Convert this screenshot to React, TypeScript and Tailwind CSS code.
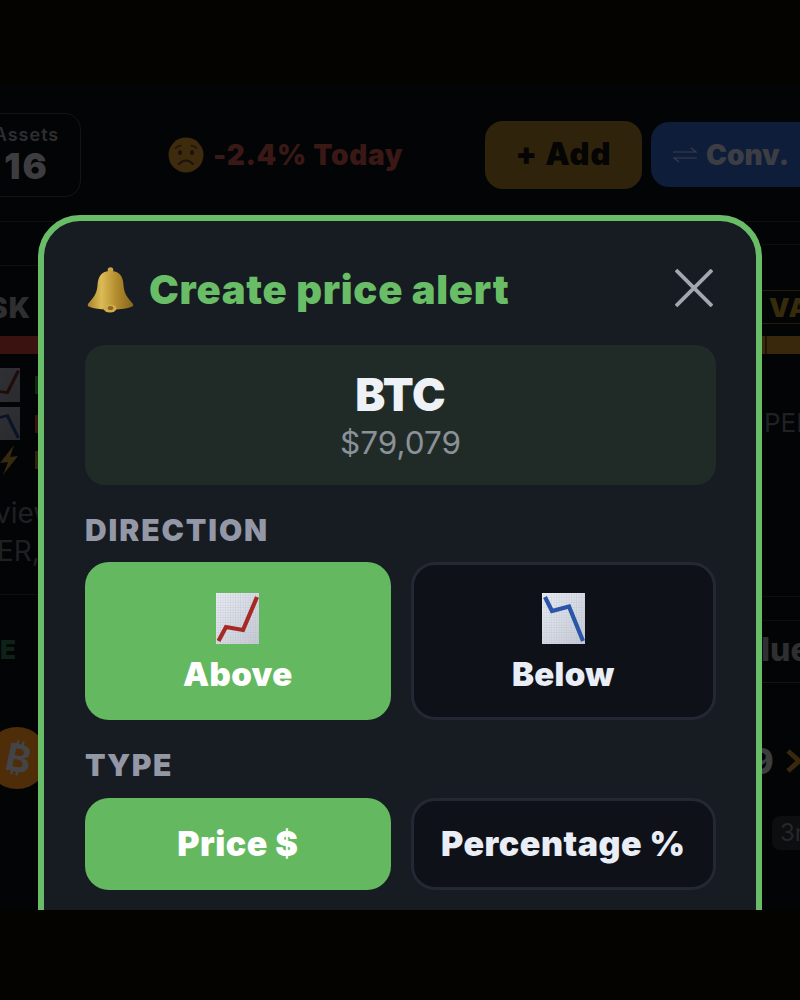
import React from 'react';

function Chart({ up, className }: { up: boolean; className: string }) {
  const id = up ? 'grid-up' : 'grid-down';
  return (
    <svg viewBox="0 0 43 51" preserveAspectRatio="none" className={className}>
      <defs>
        <linearGradient id={`${id}-bg`} x1="0" y1="0" x2="1" y2="1">
          <stop offset="0" stopColor="#eceff5" />
          <stop offset="1" stopColor="#c6cad4" />
        </linearGradient>
        <pattern id={id} width="2.5" height="2.5" patternUnits="userSpaceOnUse">
          <path d="M2.5 0V2.5H0" fill="none" stroke="#a9b1c6" strokeWidth="0.4" />
        </pattern>
      </defs>
      <rect width="43" height="51" fill={`url(#${id}-bg)`} />
      <rect width="43" height="51" fill={`url(#${id})`} />
      {up ? (
        <path d="M2.5 48L10 34L27 37L41 4" fill="none" stroke="#a52a25" strokeWidth="4.2" />
      ) : (
        <path d="M3 4L10 18L27 13.5L41 48" fill="none" stroke="#2a55a8" strokeWidth="4.2" />
      )}
    </svg>
  );
}

function Bell() {
  return (
    <svg viewBox="0 0 47 46" className="w-[47px] h-[46px] ml-[2px] shrink-0">
      <defs>
        <linearGradient id="bell-body" x1="0" y1="0" x2="1" y2="0">
          <stop offset="0" stopColor="#a8842a" />
          <stop offset="0.3" stopColor="#dcbb55" />
          <stop offset="0.65" stopColor="#b08a2c" />
          <stop offset="1" stopColor="#86651c" />
        </linearGradient>
      </defs>
      <circle cx="23.5" cy="3" r="2.8" fill="#c9a548" />
      <path
        d="M23.5 4C14 4 11 10 10.5 18C10 27 6 31 1 37C0 39 2 40 6 41C17 43 30 43 41 41C45 40 47 39 46 37C41 31 37 27 36.5 18C36 10 33 4 23.5 4Z"
        fill="url(#bell-body)"
      />
      <ellipse cx="23" cy="41.5" rx="6.5" ry="4" fill="#d3ad4b" />
      <ellipse cx="23.5" cy="41" rx="2.8" ry="2" fill="#8a6a1e" />
    </svg>
  );
}

function SadFace() {
  return (
    <svg viewBox="0 0 36 36" className="w-[36px] h-[36px] shrink-0">
      <circle cx="18" cy="18" r="17.5" fill="#3e2b0e" />
      <path d="M7 11.5Q10 8.5 13.5 8.5M22.5 8.5Q26 8.5 29 11.5" fill="none" stroke="#20150a" strokeWidth="1.4" />
      <ellipse cx="12" cy="15.5" rx="2" ry="2.6" fill="#1b1208" />
      <ellipse cx="24" cy="15.5" rx="2" ry="2.6" fill="#1b1208" />
      <path d="M11 27Q18 20 25 27" fill="none" stroke="#1b1208" strokeWidth="2" strokeLinecap="round" />
    </svg>
  );
}

function Bolt() {
  return (
    <svg viewBox="0 0 18 30" className="w-[18px] h-[30px]">
      <path d="M14 0L0 18L8 17L3 30L18 11L10 12Z" fill="#352a0d" />
    </svg>
  );
}

function Backdrop() {
  return (
    <div className="flex flex-col h-full overflow-hidden">
      <div className="flex items-center h-[137px] pt-[3px] border-b border-[#0e0f11] shrink-0">
        <div className="w-[109px] h-[84px] -ml-[28px] shrink-0 border border-[#131417] rounded-[16px] flex flex-col items-center justify-center">
          <span className="text-[18px] leading-[22px] font-semibold tracking-[1px] text-[#2e2e31]">Assets</span>
          <span className="text-[36px] leading-[40px] font-black tracking-[2px] text-[#3d3d3f]">16</span>
        </div>
        <div className="ml-[87px] flex items-center gap-[9px] w-[317px] shrink-0">
          <SadFace />
          <span className="text-[28px] font-black text-[#3a1816] tracking-[0.7px] whitespace-nowrap">-2.4% Today</span>
        </div>
        <div className="w-[157px] h-[68px] shrink-0 rounded-[18px] bg-[#2f230b] flex items-center justify-center text-[31px] font-black text-[#050505] whitespace-nowrap tracking-[1px]">
          + Add
        </div>
        <div className="w-[170px] h-[65px] ml-[9px] shrink-0 rounded-[18px] bg-[#0e1d3a] flex items-center pl-[22px] gap-[9px] text-[28px] font-black text-[#3c3e44] whitespace-nowrap">
          <svg viewBox="0 0 24 16" className="w-[24px] h-[16px] shrink-0" fill="none" stroke="#3a3e48" strokeWidth="1.2">
            <path d="M0 5H23L18 1M24 11H1L6 15" />
          </svg>
          Conv.
        </div>
      </div>

      <div className="flex justify-between flex-1">
        <div className="w-[38px] overflow-hidden flex flex-col">
          <div className="h-[44px] border-b border-[#0e0f11] shrink-0" />
          <div className="h-[70px] shrink-0 flex items-center justify-end pt-[13px] pr-[7px] text-[28px] font-black text-[#2f2f31] tracking-[1px]">SK</div>
          <div className="h-[18px] shrink-0 bg-[#3a1310]" />
          <div className="flex items-center justify-between mt-[14px] h-[34px] shrink-0">
            <Chart up className="w-[34px] h-[34px] -ml-[14px] opacity-20" />
            <div className="w-[3px] h-[18px] bg-[#0d2911]" />
          </div>
          <div className="flex items-center justify-between mt-[5px] h-[33px] shrink-0">
            <Chart up={false} className="w-[34px] h-[33px] -ml-[14px] opacity-20" />
            <div className="w-[3px] h-[18px] bg-[#36130e]" />
          </div>
          <div className="flex items-center justify-between mt-[5px] h-[30px] shrink-0">
            <Bolt />
            <div className="w-[3px] h-[18px] bg-[#2d240b]" />
          </div>
          <div className="mt-[19px] -ml-[5px] text-[28px] leading-[38px] text-[#1f2023] whitespace-nowrap">view</div>
          <div className="-ml-[3px] text-[28px] leading-[38px] text-[#1f2023] whitespace-nowrap">ER,</div>
          <div className="mt-[24px] border-b border-[#0e0f11]" />
          <div className="mt-[40px] text-[26px] leading-[30px] font-black text-[#0e2217]">E</div>
          <div className="mt-[62px] -ml-[14px] w-[62px] h-[62px] shrink-0 rounded-full bg-[#4f2d08] flex items-center justify-center">
            <span className="text-[38px] font-bold text-[#434448] rotate-12 translate-x-[2px]">₿</span>
          </div>
        </div>

        <div className="w-[38px] overflow-hidden flex flex-col">
          <div className="h-[23px] border-b border-[#0e0f11] shrink-0" />
          <div className="h-[45px] shrink-0" />
          <div className="h-[34px] shrink-0 border-y border-[#241c07] pl-[7px] flex items-center text-[26px] font-black text-[#362b0b] whitespace-nowrap tracking-[1px]">VA</div>
          <div className="h-[18px] mt-[12px] shrink-0 bg-[#3a280d] pl-[3px]">
            <div className="w-[2px] h-full bg-[#1c1406]" />
          </div>
          <div className="mt-[54px] pl-[2px] text-[26px] leading-[30px] text-[#202124] whitespace-nowrap">PER</div>
          <div className="mt-[158px] border-b border-[#0e0f11]" />
          <div className="mt-[23px] border-b border-[#0e0f11]" />
          <div className="h-[61px] flex items-center pb-[4px] text-[32px] font-extrabold text-[#2f2f31] -ml-[1px] whitespace-nowrap">lue</div>
          <div className="border-b border-[#131418]" />
          <div className="mt-[56px] flex items-center h-[44px] -ml-[12px] gap-[12px]">
            <span className="text-[36px] font-extrabold text-[#3d3d3f]">9</span>
            <svg viewBox="0 0 16 24" className="w-[16px] h-[24px] shrink-0" fill="none" stroke="#38280c" strokeWidth="5">
              <path d="M2 2L13 12L2 22" />
            </svg>
          </div>
          <div className="mt-[33px] ml-[10px] w-[60px] h-[34px] shrink-0 rounded-[8px] bg-[#0d0e10] pl-[8px] text-[24px] leading-[34px] text-[#26272a]">3m</div>
        </div>
      </div>
    </div>
  );
}

function OptionButton({ active, className, children }: { active: boolean; className: string; children: React.ReactNode }) {
  return (
    <div
      className={`rounded-[24px] flex flex-col items-center font-black ${className} ${
        active ? 'bg-[#64b960] text-white' : 'bg-[#0e1118] border-[3px] border-[#232833] text-[#e9edf5]'
      }`}
    >
      {children}
    </div>
  );
}

function AlertModal() {
  return (
    <div className="absolute left-[38px] right-[38px] top-[130px] h-[800px] rounded-[42px] border-[6px] border-[#68bd66] bg-[#171b22] pl-[41px] pr-[40px] pt-[46px]">
      <div className="flex items-center h-[46px]">
        <Bell />
        <h2 className="ml-[15px] text-[40px] font-black tracking-[0.7px] text-[#68bd66] whitespace-nowrap">Create price alert</h2>
        <svg viewBox="0 0 38 38" className="w-[38px] h-[38px] ml-auto mr-[3px] -mt-[4px]" stroke="#a3a6ae" strokeWidth="3.8">
          <path d="M1 1L37 37M37 1L1 37" />
        </svg>
      </div>

      <div className="mt-[32px] h-[140px] rounded-[20px] bg-[#202b28] flex flex-col items-center justify-center">
        <div className="text-[45px] leading-[56px] font-black text-[#eef1f6]">BTC</div>
        <div className="text-[31.5px] leading-[40px] text-[#8b9198]">$79,079</div>
      </div>

      <div className="mt-[28px] mb-[15px] text-[30px] leading-[34px] font-black tracking-[1.9px] text-[#9498a6]">DIRECTION</div>
      <div className="grid grid-cols-2 gap-[20px]">
        <OptionButton active className="h-[158px] pt-[31px] gap-[11px] text-[33px] tracking-[0.3px] leading-[38px]">
          <Chart up className="w-[43px] h-[51px]" />
          Above
        </OptionButton>
        <OptionButton active={false} className="h-[158px] pt-[28px] gap-[11px] text-[33px] tracking-[0.3px] leading-[38px]">
          <Chart up={false} className="w-[43px] h-[51px]" />
          Below
        </OptionButton>
      </div>

      <div className="mt-[28px] mb-[16px] text-[30px] leading-[34px] font-black tracking-[1.5px] text-[#9498a6]">TYPE</div>
      <div className="grid grid-cols-2 gap-[20px]">
        <OptionButton active className="h-[92px] justify-center text-[34px] tracking-[0.5px] leading-[38px]">Price $</OptionButton>
        <OptionButton active={false} className="h-[92px] justify-center text-[34px] tracking-[0.5px] leading-[38px]">Percentage %</OptionButton>
      </div>
    </div>
  );
}

export default function App() {
  return (
    <div className="w-[800px] h-[1000px] flex flex-col bg-[#050300] font-['Inter',sans-serif] overflow-hidden">
      <div className="h-[85px] shrink-0" />
      <div className="relative h-[825px] shrink-0 bg-[#030406] overflow-hidden">
        <Backdrop />
        <AlertModal />
      </div>
      <div className="h-[90px] shrink-0" />
    </div>
  );
}
